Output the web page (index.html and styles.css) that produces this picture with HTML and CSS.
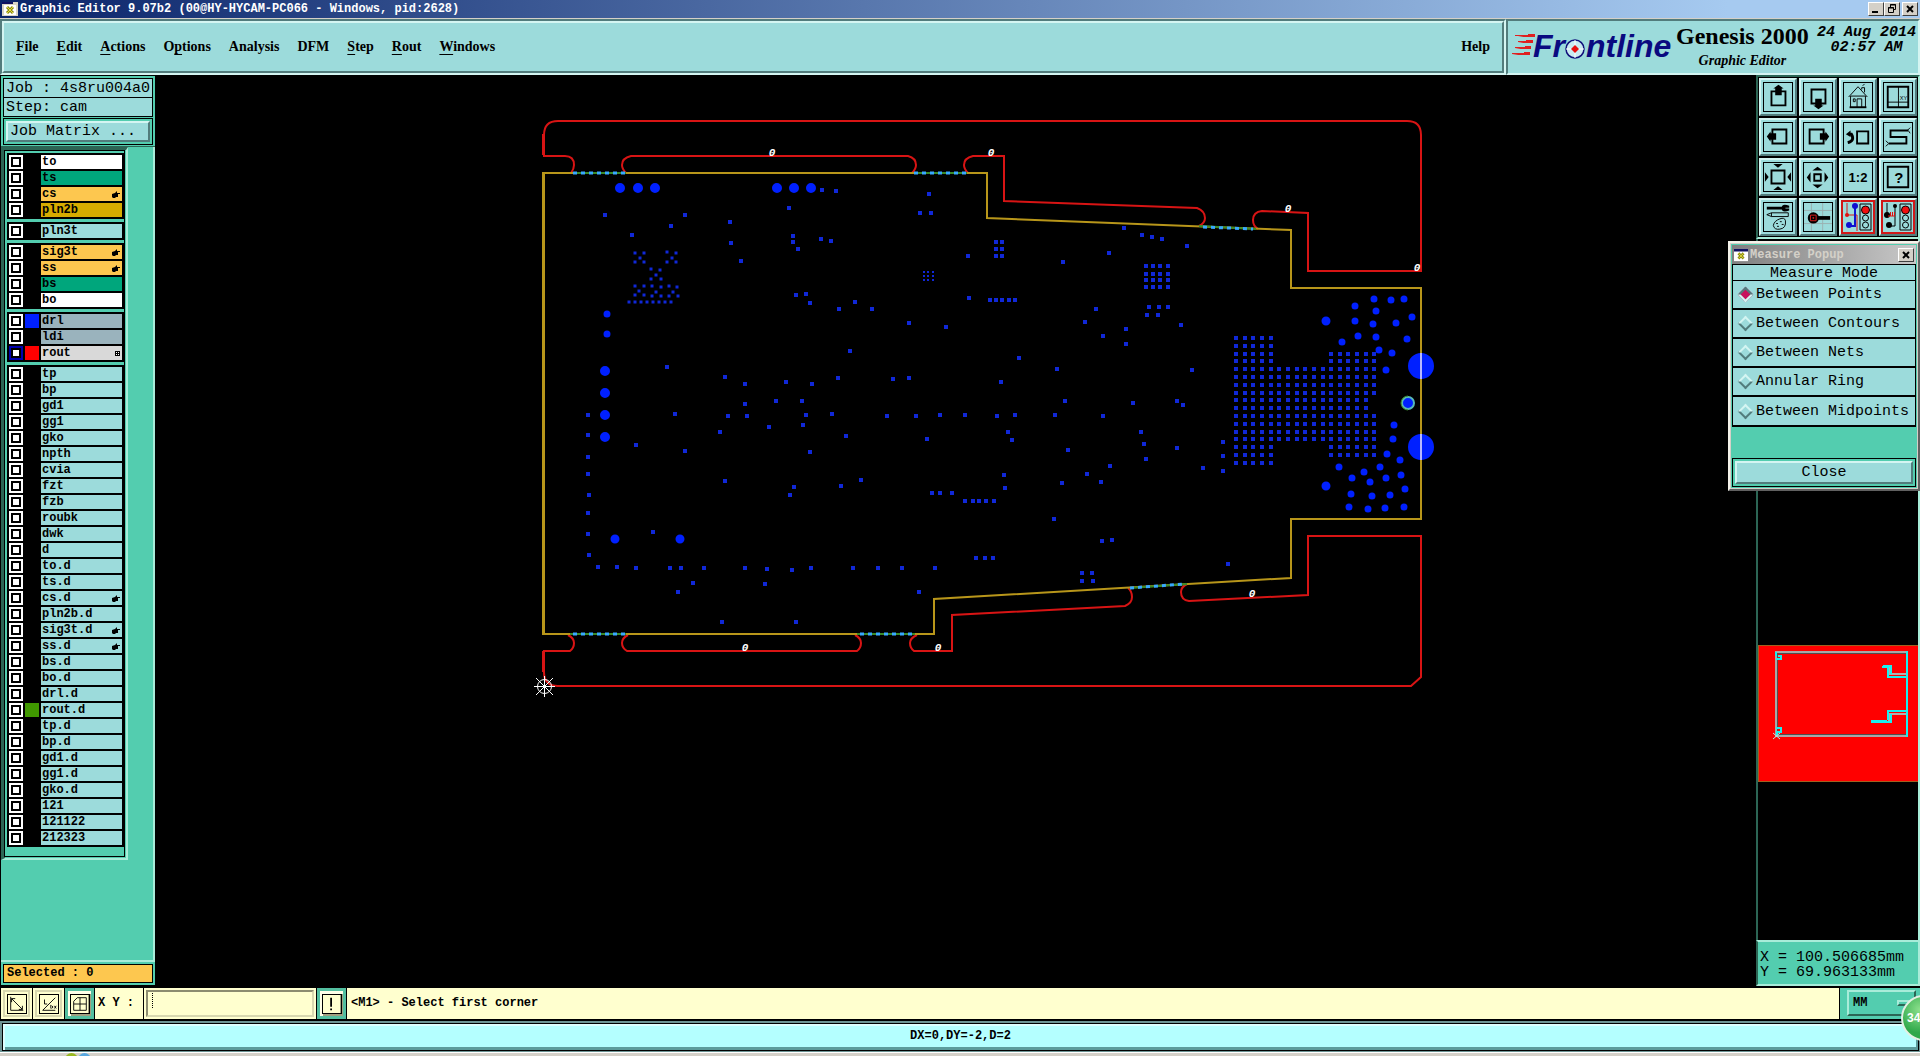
FILE: index.html
```html
<!DOCTYPE html>
<html lang="en">
<head>
  <meta charset="utf-8">
  <title>Graphic Editor 9.07b2</title>
  <link rel="stylesheet" href="styles.css">
</head>
<body>
<div class="app">

  <div class="titlebar">
    <svg class="app-icon" width="16" height="14" viewBox="0 0 16 14">
      <rect width="16" height="14" fill="#d8d4c4"/>
      <rect width="11" height="2" fill="#101060"/>
      <rect x="2" y="3" width="12" height="10" fill="#fff"/>
      <path d="M5 5l6 6M11 5l-6 6" stroke="#8a8a10" stroke-width="3"/>
      <path d="M5 5l6 6M11 5l-6 6" stroke="#e8e040" stroke-width="1"/>
    </svg>
    <span class="titlebar-text">Graphic Editor 9.07b2 (00@HY-HYCAM-PC066 - Windows, pid:2628)</span>
    <div class="window-buttons">
      <button class="win-btn" aria-label="Minimize"><svg width="12" height="10" viewBox="0 0 12 10"><path d="M2 8h6" stroke="#000" stroke-width="2"/></svg></button>
      <button class="win-btn" aria-label="Restore"><svg width="12" height="10" viewBox="0 0 12 10"><path d="M4.500 3.500v-3h5v5h-2M4 1h6M2.500 3.500h5v5h-5zM2 4h6" fill="none" stroke="#000"/></svg></button>
      <button class="win-btn close" aria-label="Close window"><svg width="12" height="10" viewBox="0 0 12 10"><path d="M3 2l6 6M9 2l-6 6" stroke="#000" stroke-width="2"/></svg></button>
    </div>
  </div>

  <header class="header">
    <nav class="menubar">
      <div class="menubar-inner">
        <button class="menu"><u>F</u>ile</button>
        <button class="menu"><u>E</u>dit</button>
        <button class="menu"><u>A</u>ctions</button>
        <button class="menu">O<u>p</u>tions</button>
        <button class="menu">Analysis</button>
        <button class="menu">DFM</button>
        <button class="menu"><u>S</u>tep</button>
        <button class="menu"><u>R</u>out</button>
        <button class="menu"><u>W</u>indows</button>
        <button class="menu help">Help</button>
      </div>
    </nav>
    <div class="brand">
      <svg class="logo" width="162" height="46" viewBox="0 -6 162 46">
        <path d="M6 6l17-3v3zM6 12l15-3v3zM3 18l16-3v3zM0 24l18-3v3z" fill="#e02020"/>
        <path d="M3 4.500h18M6 10.500h14M3 16.500h16M0 22.500h18" stroke="#e02020"/>
        <path d="M16 3h7v3h-7zM14 9h7v3h-7zM13 15h6v3h-6zM12 21h6v3h-6z" fill="#e02020"/>
        <text x="21" y="26" class="logo-text">Fr</text>
        <circle cx="63" cy="18" r="9" fill="#c9eaf0" stroke="#10107a" stroke-width="1.500"/>
        <path d="M63 9v18M54 18h18" stroke="#fff"/>
        <path d="M63 14l4 4-4 4-4-4z" fill="#e80c0c"/>
        <text x="74" y="26" class="logo-text">ntline</text>
      </svg>
      <div class="product">
        <div class="product-name">Genesis 2000</div>
        <div class="product-sub">Graphic Editor</div>
      </div>
      <div class="clock">24 Aug 2014<br>02:57 AM</div>
    </div>
  </header>

  <main class="main">
    <aside class="left">
      <div class="job-box">
        <div class="job-line">Job : 4s8ru004a0</div>
        <div class="job-line">Step: cam</div>
        <div class="matrix-frame"><button class="matrix-btn">Job Matrix ...</button></div>
      </div>
      <div class="layers-area">
        <div class="layers" id="layers"></div>
      </div>
      <div class="selected">Selected : 0</div>
    </aside>

    <div class="canvas">
      <svg class="board" viewBox="155 75 1601 912" preserveAspectRatio="xMinYMin meet">
        <g id="holes"></g>
        <!-- rout path -->
        <g fill="none" stroke="#d81414" stroke-width="2">
          <path d="M571 173q3-4 3-8q0-9-9-9h-21v-21q0-14 14-14h849q14 0 14 14v136h-113v-58l-46-2q-9 1-9 9q0 6 5 9"/>
          <path d="M626 173q-4-4-4-8q0-7 9-9h277q8 2 8 9q0 4-4 8"/>
          <path d="M968 173q-4-4-4-8q0-7 9-9h31v45l193 7q8 3 8 10q0 5-6 8"/>
          <path d="M568 635q6 3 6 8q0 5-4 8h-26v21q0 14 14 14h853l10-9v-141h-113v59l-119 6q-8-1-8-9q0-5 6-8"/>
          <path d="M628 635q-6 3-6 8q0 5 5 8h230q4-3 4-8q0-5-6-8"/>
          <path d="M917 635q-7 3-7 8q0 5 4 8h38v-36l173-9q7-3 7-9q0-6-4-9"/>
          <path d="M543 155v-21M543 651v21" />
        </g>
        <!-- board profile -->
        <g fill="none" stroke="#b8961a" stroke-width="2">
          <path d="M544 173h443v45l304 12v58h130v231h-130v59l-357 21v35h-390z"/>
          <path d="M543 172v463"/>
        </g>
        <!-- break-off tabs -->
        <g fill="none" stroke-width="2">
          <path d="M573 173h53M914 173h53M1199 226l57 3M570 634h56M857 634h58M1130 588l57-4" stroke="#3a8a28"/>
          <path d="M573 173h53M914 173h53M1203 227l50 2M573 634h53M860 634h52M1130 588l54-4" stroke="#38a8ff" stroke-width="3" stroke-dasharray="4 4"/>
        </g>
        <path d="M1421 353v26M1421 434v26" stroke="#b8b8ff" stroke-width="2"/>
        <circle cx="1408" cy="403" r="6" fill="#0020ff" stroke="#58b8b8" stroke-width="2"/>
        <path d="M1408 396a7 7 0 0 0 0 14" fill="none" stroke="#3a8a28" stroke-width="1"/>
        <g class="marks">
          <text x="772" y="156">0</text>
          <text x="991" y="156">0</text>
          <text x="1288" y="212">0</text>
          <text x="1417" y="271">0</text>
          <text x="745" y="651">0</text>
          <text x="938" y="651">0</text>
          <text x="1252" y="597">0</text>
        </g>
        <!-- origin -->
        <g fill="none" stroke="#fff">
          <circle cx="544.500" cy="686.500" r="7"/>
          <path d="M534 686.500h21M544.500 676v21M536 678l17 17M553 678l-17 17"/>
        </g>
      </svg>
    </div>

    <aside class="right">
      <div class="tools">
        <button class="tool" aria-label="Pan up"><svg viewBox="0 0 30 30"><path d="M8 9h15v15h-15z" class="s2"/><path d="M12 13v-7h-2l5.500-4 5.500 4h-2v7z"/></svg></button>
        <button class="tool" aria-label="Pan down"><svg viewBox="0 0 30 30"><path d="M8 7h15v15h-15z" class="s2"/><path d="M12 17v7h-2l5.500 4 5.500-4h-2v-7z"/></svg></button>
        <button class="tool" aria-label="Home"><svg viewBox="0 0 30 30"><path d="M5 15L15 4l10 11M7 14v12h16v-12M7 14h16" class="s1"/><path d="M6 26h18" class="s2"/><path d="M19 7v-2h3v5M14 26v-9h5v9M10 17h2v3h-2zM20 3l2-2" class="s1"/></svg></button>
        <button class="tool" aria-label="Zoom area"><svg viewBox="0 0 30 30"><path d="M4 4h22v22h-22z" class="s2"/><path d="M15.500 4v22M4 20.500h22" class="s1"/><text x="21" y="18" class="tiny">XY</text></svg></button>
        <button class="tool" aria-label="Pan left"><svg viewBox="0 0 30 30"><path d="M9 7h15v15h-15z" class="s2"/><path d="M13 11h-6v-2l-4 5.500 4 5.500v-2h6z"/></svg></button>
        <button class="tool" aria-label="Pan right"><svg viewBox="0 0 30 30"><path d="M6 7h15v15h-15z" class="s2"/><path d="M17 11h6v-2l4 5.500-4 5.500v-2h-6z"/></svg></button>
        <button class="tool" aria-label="Previous view"><svg viewBox="0 0 30 30"><path d="M14 9h12v13h-12z" class="s2"/><path d="M4 21q8-2 4-9h-2" fill="none" stroke="#000" stroke-width="3"/><path d="M2 12l5-4v7z"/></svg></button>
        <button class="tool" aria-label="Net trace"><svg viewBox="0 0 30 30"><path d="M26 8h-19v7h17v7h-19" class="s2"/><path d="M25 8l3-3M26 8l2 3M5 22l-3-3M5 22l-3 3" class="s1"/></svg></button>
        <button class="tool" aria-label="Zoom in"><svg viewBox="0 0 30 30"><path d="M8 8h14v14h-14z" class="s2"/><path d="M10 1h10l-5 4zM10 29h10l-5-4zM1 10v10l4-5zM29 10v10l-4-5z"/></svg></button>
        <button class="tool" aria-label="Zoom out"><svg viewBox="0 0 30 30"><path d="M11 12h7v7h-7z" class="s2"/><path d="M9 8h11l-5.500-4zM9 23h11l-5.500 4zM7 10v11l-4-5.500zM22 10v11l4-5.500z"/></svg></button>
        <button class="tool" aria-label="Scale one to two"><svg viewBox="0 0 30 30"><text x="15" y="20" class="ratio">1:2</text></svg></button>
        <button class="tool" aria-label="Query"><svg viewBox="0 0 30 30"><path d="M4 4h22v22h-22z" class="s2"/><text x="16" y="21" class="query">?</text></svg></button>
        <button class="tool" aria-label="Setup"><svg viewBox="0 0 30 30"><path d="M3 4h17v3h-17z"/><path d="M27 3q-8-3-8 2.500q0 5.500 8 2.500v-2h-4v-1h4z"/><path d="M3 12.500l5-2h18v4h-18zM8 10.500v4" class="s1"/><path d="M17 17q5-2 6 2q1 8-6 9q-6 1-7-4q1-5 7-7z" class="s1"/><path d="M13 22h2M17 20h2M14 25h2M19 23h2" class="s1"/></svg></button>
        <button class="tool" aria-label="Snap"><svg viewBox="0 0 30 30"><path d="M8 0v30M20 0v30M0 8h30M0 22h30" stroke="#9ab0b0"/><circle cx="10" cy="16" r="6"/><path d="M14 14h14v4h-14z"/><path d="M7 13h6v6h-6zM9.500 15.500h1v1h-1z" fill="none" stroke="#e02020"/></svg></button>
        <button class="tool alert" aria-label="Net analyzer"><svg viewBox="0 0 30 30"><path d="M4 1v12h10v16" fill="none" stroke="#d81818"/><circle cx="4" cy="13" r="2" fill="#e01010"/><path d="M12 5v19h-7" fill="none" stroke="#1010d0" stroke-width="2"/><circle cx="12" cy="4" r="3" fill="#1010d0"/><circle cx="6" cy="23" r="3" fill="#1010d0"/><path d="M17 2h11v26h-11z" class="s1"/><circle cx="22.500" cy="8" r="4" fill="#f01010" stroke="#000"/><circle cx="22.500" cy="16" r="3" class="s1"/><circle cx="22.500" cy="23" r="3" class="s1"/></svg></button>
        <button class="tool alert" aria-label="DRC check"><svg viewBox="0 0 30 30"><path d="M4 1v13M12 5v19h-7" class="s1"/><circle cx="12" cy="4" r="2"/><circle cx="4" cy="13" r="3"/><circle cx="6" cy="23" r="3"/><path d="M5 14h7M7.500 14v-4M9.500 14v-4M11.500 14v-4" fill="none" stroke="#e01010"/><path d="M17 2h11v26h-11z" class="s1"/><circle cx="22.500" cy="8" r="4" fill="#f01010" stroke="#000"/><circle cx="22.500" cy="16" r="3" class="s1"/><circle cx="22.500" cy="23" r="3" class="s1"/></svg></button>
      </div>

      <div class="overview">
        <svg viewBox="1758 239 160 700" preserveAspectRatio="xMinYMin meet">
          <rect x="1758.500" y="645.500" width="162" height="136" fill="#f00" stroke="#a06020"/>
          <g fill="none" stroke-width="2">
            <path d="M1907 652h-131v84h131" stroke="#a8a8a8"/>
            <path d="M1907 653.500h-129.500v81h129.500" stroke="#505050" stroke-width="1"/>
            <path d="M1890 665v9h17M1907 714h-18v9" stroke="#b0b0b0"/>
            <path d="M1907 651v86M1907 677h-19v-10h-6M1907 711h-19v9M1891 714v8h-20" stroke="#18f0f0"/>
            <path d="M1883 666h8v8M1871 721h16" stroke="#18f0f0"/>
            <path d="M1776 652v4M1776 659h5v-3h-3M1777 735v-3h4v-4h-5" stroke="#18f0f0"/>
          </g>
          <path d="M1773 733l7 6M1780 733l-7 6" stroke="#b0e8e8"/>
        </svg>
      </div>
      <div class="coords">X = 100.506685mm<br>Y = 69.963133mm</div>
    </aside>
  </main>

  <div class="command">
    <button class="cmd-btn" aria-label="Select by diagonal"><svg viewBox="0 0 20 20"><path d="M3 2v15h14M4 4l12 12M4 8v-4h4M16 12v4h-4" class="s1"/></svg></button>
    <button class="cmd-btn" aria-label="Angle"><svg viewBox="0 0 20 20"><path d="M3 17L17 3M3 17h14M5 5v5h3M12 11v4M13 12q3 1 0 3M16 12l2 3M18 12l-2 3" class="s1"/></svg></button>
    <button class="cmd-btn framed" aria-label="Grid snap"><svg viewBox="0 0 20 20"><path d="M3 7l4-4h10v14h-14zM10 3v14M3 10h14" class="s1"/></svg></button>
    <label class="xy-label" for="xy">X Y :</label>
    <div class="xy-box">
      <input type="text" id="xy" class="xy-input">
      <span class="ibeam"></span>
    </div>
    <button class="cmd-btn framed" aria-label="Alert"><svg viewBox="0 0 20 20"><path d="M9 3v10M9 15v2" class="s2"/></svg></button>
    <div class="prompt">&lt;M1&gt; - Select first corner</div>
    <div class="units">
      <select class="units-select" aria-label="Units">
        <option>MM</option>
        <option>Inch</option>
      </select>
      <span class="units-bar"></span>
    </div>
  </div>

  <div class="status"><div class="status-inner">DX=0,DY=-2,D=2</div></div>

  <div class="taskbar">
    <span class="task-dot green"></span><span class="task-dot blue"></span>
  </div>

  <form class="popup">
    <div class="popup-title">
      <svg class="app-icon" width="14" height="14" viewBox="0 0 16 14">
        <rect width="16" height="14" fill="#fff"/>
        <rect width="16" height="3" fill="#101060"/>
        <path d="M5 5l6 6M11 5l-6 6" stroke="#8a8a10" stroke-width="3"/>
        <path d="M5 5l6 6M11 5l-6 6" stroke="#e8e040" stroke-width="1"/>
      </svg>
      <span>Measure Popup</span>
      <button type="button" class="win-btn popup-x" aria-label="Close popup"><svg width="12" height="10" viewBox="0 0 12 10"><path d="M3 2l6 6M9 2l-6 6" stroke="#000" stroke-width="2"/></svg></button>
    </div>
    <div class="popup-head">Measure Mode</div>
    <div class="modes">
      <label class="mode"><input type="radio" name="mode" checked><span>Between Points</span></label>
      <label class="mode"><input type="radio" name="mode"><span>Between Contours</span></label>
      <label class="mode"><input type="radio" name="mode"><span>Between Nets</span></label>
      <label class="mode"><input type="radio" name="mode"><span>Annular Ring</span></label>
      <label class="mode"><input type="radio" name="mode"><span>Between Midpoints</span></label>
    </div>
    <div class="popup-foot"><button type="button" class="popup-close">Close</button></div>
  </form>

  <div class="badge">34</div>
</div>
<script src="script.js"></script>
</body>
</html>
```
FILE: styles.css
```css
* {
  box-sizing: border-box;
}
body {
  margin: 0;
  background: #000;
  color: #000;
  font-family: "Liberation Mono", monospace;
  font-size: 12px;
}
button,
input,
select {
  font: inherit;
  color: inherit;
  margin: 0;
  padding: 0;
  border: 0;
  border-radius: 0;
  background: none;
}
.app {
  position: relative;
  display: flex;
  flex-direction: column;
  min-height: 100vh;
  overflow: hidden;
}

/* title bar */
.titlebar {
  display: flex;
  align-items: center;
  height: 19px;
  padding: 0 2px;
  border-bottom: 1px solid #d4d0c8;
  background: linear-gradient(to right, #0a246a, #a6caf0 90%);
  color: #fff;
  font-weight: bold;
}
.app-icon {
  margin-right: 2px;
}
.window-buttons {
  display: flex;
  margin-left: auto;
}
.win-btn {
  display: flex;
  align-items: center;
  justify-content: center;
  width: 16px;
  height: 14px;
  background: #d4d0c8;
  border: 1px solid;
  border-color: #fff #404040 #404040 #fff;
}
.win-btn.close {
  margin-left: 2px;
}

/* header */
.header {
  display: flex;
  height: 56px;
  background: #9cdbdb;
}
.menubar {
  flex: 1;
  border: 2px solid;
  border-color: #527c7c #d4f5f2 #d4f5f2 #527c7c;
}
.menubar-inner {
  display: flex;
  align-items: center;
  gap: 18px;
  height: 100%;
  padding: 0 12px;
  border: 2px solid;
  border-color: #d4f5f2 #527c7c #527c7c #d4f5f2;
}
.menu {
  font-family: "Liberation Serif", serif;
  font-size: 14px;
  font-weight: bold;
}
.menu u {
  text-underline-offset: 3px;
}
.menu.help {
  margin-left: auto;
}
.brand {
  display: flex;
  width: 414px;
  padding-left: 4px;
  border: 2px solid;
  border-color: #527c7c #d4f5f2 #d4f5f2 #527c7c;
}
.logo {
  flex: none;
  margin-top: 4px;
}
.logo-text {
  font-family: "Liberation Sans", sans-serif;
  font-size: 32px;
  font-weight: bold;
  font-style: italic;
  fill: #0a0a80;
}
.product {
  padding-left: 2px;
  font-family: "Liberation Serif", serif;
  font-weight: bold;
  text-align: center;
}
.product-name {
  font-size: 24px;
  line-height: 30px;
  white-space: nowrap;
}
.product-sub {
  font-size: 14px;
  font-style: italic;
  line-height: 20px;
}
.clock {
  margin-left: auto;
  padding: 4px 2px 0 0;
  font-size: 15px;
  font-weight: bold;
  font-style: italic;
  line-height: 15px;
  text-align: center;
  white-space: nowrap;
}

/* main */
.main {
  flex: 1;
  display: grid;
  grid-template-columns: 155px 1fr 164px;
  background: #000;
}
.left {
  display: flex;
  flex-direction: column;
  margin: 1px 0 2px 1px;
  background: #53cdaf;
}
.job-box {
  padding: 2px 2px 1px;
  border-bottom: 1px solid #2c6655;
}
.job-line {
  height: 20px;
  margin-bottom: -1px;
  padding-left: 2px;
  border: 1px solid #000;
  background: #9cdbdb;
  font-size: 15px;
  line-height: 19px;
}
.matrix-frame {
  margin-top: 2px;
  padding: 2px;
  border: 1px solid #000;
}
.matrix-btn {
  display: block;
  width: 100%;
  height: 21px;
  padding-left: 2px;
  border: 2px solid;
  border-color: #d4f5f2 #527c7c #527c7c #d4f5f2;
  background: #9cdbdb;
  font-size: 15px;
  line-height: 17px;
  text-align: left;
}
.layers-area {
  flex: 1;
  border-right: 2px solid #a8ecd9;
  border-bottom: 2px solid #a8ecd9;
}
.layers {
  display: flex;
  flex-direction: column;
  gap: 3px;
  width: 127px;
  padding: 3px 2px 11px 2px;
  background: #53cdaf;
  border: 4px solid;
  border-width: 3px 2px 2px 4px;
  border-color: #2c6655 #a8ecd9 #a8ecd9 #2c6655;
  outline: 1px solid #000;
  outline-offset: -4px;
}
.group {
  display: flex;
  flex-direction: column;
  gap: 2px;
  padding: 2px;
  background: #000;
}
.layer {
  display: grid;
  grid-template-columns: 14px 14px 1fr;
  gap: 2px;
  height: 14px;
}
.layer input {
  appearance: none;
  width: 14px;
  height: 14px;
  border: 2px solid #fff;
  background: #fff;
  box-shadow: inset 0 0 0 2px #000;
}
.layer input:checked {
  border-color: #0000b0;
}
.layer-name {
  display: flex;
  align-items: center;
  padding: 0 2px 0 1px;
  background: #9cdbdb;
  font-weight: bold;
  line-height: 14px;
}
.layer-name svg {
  margin-left: auto;
}
.mask .layer-name { background: #00a67c; }
.silk .layer-name { background: #fff; }
.signal .layer-name { background: #fdc74f; }
.plane .layer-name { background: #d6ab00; }
.drill .layer-name { background: #9ab3bd; }
.rout .layer-name { background: #d9d9d9; }
.swatch-blue { background: #0020ff; }
.swatch-red { background: #f00; }
.swatch-green { background: #409800; }
.selected {
  height: 19px;
  margin: 2px;
  padding-left: 3px;
  border: 1px solid #000;
  background: #fdc74f;
  font-weight: bold;
  line-height: 17px;
}

.canvas {
  min-width: 0;
}
.board {
  display: block;
  width: 100%;
}
.marks text {
  fill: #fff;
  font-size: 11px;
  font-weight: bold;
  font-style: italic;
  text-anchor: middle;
}

/* right side */
.right {
  display: flex;
  flex-direction: column;
}
.tools {
  display: grid;
  grid-template-columns: repeat(4, 38px);
  gap: 2px;
  padding: 1px;
  border: 2px solid;
  border-color: #2c6655 #a8ecd9 #a8ecd9 #2c6655;
}
.tool {
  width: 38px;
  height: 38px;
  padding: 2px;
  border: 2px solid;
  border-color: #d4f5f2 #527c7c #527c7c #d4f5f2;
  background: #9cdbdb;
}
.tool svg {
  display: block;
  width: 30px;
  height: 30px;
  border: 1px solid #000;
}
.tool.alert {
  padding: 0;
}
.tool.alert svg {
  width: 34px;
  height: 34px;
  border: 2px solid #d01818;
}
.s1 {
  fill: none;
  stroke: #000;
  stroke-width: 1;
}
.s2 {
  fill: none;
  stroke: #000;
  stroke-width: 2;
}
.tiny,
.ratio,
.query {
  text-anchor: middle;
  font-family: "Liberation Sans", sans-serif;
}
.tiny {
  font-size: 6px;
}
.ratio {
  font-size: 14px;
  font-weight: bold;
}
.query {
  font-size: 16px;
  font-weight: bold;
}
.overview {
  flex: 1;
  border-left: 2px solid #2c6655;
  border-right: 2px solid #a8ecd9;
}
.overview svg {
  display: block;
  width: 100%;
}
.coords {
  height: 46px;
  margin-bottom: 1px;
  padding: 8px 0 0 2px;
  border: 2px solid;
  border-color: #a8ecd9 #a8ecd9 #a8ecd9 #2c6655;
  background: #53cdaf;
  font-size: 15px;
  line-height: 15px;
}

/* command line */
.command {
  display: flex;
  height: 34px;
  padding: 1px 0 2px 1px;
  gap: 1px;
  background: #000;
}
.cmd-btn {
  display: flex;
  align-items: center;
  justify-content: center;
  width: 31px;
  background: #ffffcf;
  box-shadow: inset 0 0 0 2px #ffffcf, inset 0 0 0 4px #d8d8b0;
}
.cmd-btn.framed {
  width: 29px;
  box-shadow: inset 0 0 0 3px #53bfa0, inset 3px 3px 0 3px #ffffe8, inset -3px -3px 0 3px #a0a080;
}
.cmd-btn svg {
  width: 20px;
  height: 20px;
  border: 1px solid #000;
}
.xy-label {
  width: 48px;
  padding-left: 3px;
  background: #ffffcf;
  font-weight: bold;
  line-height: 31px;
}
.xy-box {
  position: relative;
  width: 172px;
  padding: 2px;
  background: #ffffcf;
}
.xy-input {
  width: 100%;
  height: 27px;
  padding: 0 8px;
  border: 2px solid;
  border-color: #8c8c70 #d8d8b0 #d8d8b0 #8c8c70;
}
.ibeam {
  position: absolute;
  left: 8px;
  top: 5px;
  height: 15px;
  border-left: 1px dotted #000;
}
.prompt {
  flex: 1;
  padding-left: 4px;
  background: #ffffcf;
  font-weight: bold;
  line-height: 31px;
}
.units {
  position: relative;
  width: 80px;
  padding: 2px 4px 3px 7px;
  background: #53cdaf;
}
.units-select {
  appearance: none;
  width: 100%;
  height: 26px;
  padding-left: 4px;
  border: 2px solid;
  border-color: #a8ecd9 #2c6655 #2c6655 #a8ecd9;
  font-weight: bold;
}
.units-bar {
  position: absolute;
  right: 5px;
  top: 12px;
  width: 18px;
  height: 6px;
  border: 2px solid;
  border-color: #a8ecd9 #2c6655 #2c6655 #a8ecd9;
}
.status {
  height: 31px;
  padding: 2px 1px 1px 2px;
  background: #6c9494;
}
.status-inner {
  height: 100%;
  border: 1px solid #000;
  background: #b4ffff;
  box-shadow: inset 2px 2px 0 #dcffff, inset -2px -3px 0 #5c9c9c;
  font-weight: bold;
  line-height: 25px;
  text-align: center;
}
.taskbar {
  display: flex;
  height: 4px;
  padding-left: 65px;
  border-top: 1px solid #fff;
  background: #d4d0c8;
  overflow: hidden;
}
.task-dot {
  flex: none;
  width: 13px;
  height: 13px;
  border-radius: 50%;
}
.task-dot.green { background: #98b820; }
.task-dot.blue { background: #58a8e0; }

/* measure popup */
.popup {
  position: absolute;
  top: 241px;
  right: 0;
  width: 192px;
  padding: 2px;
  border: 2px solid;
  border-color: #f4f2ea #606060 #606060 #f4f2ea;
  background: #53cdaf;
  outline: 1px solid #d4d0c8;
  outline-offset: -3px;
  font-size: 15px;
}
.popup-title {
  display: flex;
  align-items: center;
  height: 19px;
  padding: 0 2px;
  background: linear-gradient(to right, #808080, #c8c8c8);
  color: #d4d0c8;
  font-size: 12px;
  font-weight: bold;
}
.popup-x {
  margin-left: auto;
}
.popup-head {
  height: 17px;
  border: 1px solid #000;
  background: #9cdbdb;
  line-height: 17px;
  text-align: center;
}
.modes {
  margin-bottom: 31px;
  border: 1px solid #000;
  border-top: 0;
}
.mode {
  display: flex;
  align-items: center;
  gap: 3px;
  height: 29px;
  padding-left: 5px;
  border-bottom: 2px solid #000;
  background: #9cdbdb;
  white-space: nowrap;
}
.mode:last-child {
  border-bottom: 1px solid #000;
}
.mode input {
  appearance: none;
  flex: none;
  width: 11px;
  height: 11px;
  margin: 0 2px;
  border: 2px solid;
  border-color: #d4f5f2 #527c7c #527c7c #d4f5f2;
  transform: rotate(45deg);
}
.mode input:checked {
  border-color: #527c7c #d4f5f2 #d4f5f2 #527c7c;
  background: #c8105c;
}
.mode span {
  line-height: 27px;
}
.popup-foot {
  padding: 2px;
  border: 1px solid #000;
}
.popup-close {
  display: block;
  width: 100%;
  height: 23px;
  border: 2px solid;
  border-color: #d4f5f2 #527c7c #527c7c #d4f5f2;
  background: #9cdbdb;
}

.badge {
  position: absolute;
  right: -27px;
  bottom: 15px;
  width: 46px;
  height: 46px;
  padding-left: 4px;
  border: 2px solid #e4f0e4;
  border-radius: 50%;
  background: radial-gradient(circle at 40% 30%, #8ce08c, #2fa84a 60%);
  color: #fff;
  font-family: "Liberation Sans", sans-serif;
  font-weight: bold;
  line-height: 42px;
}
```
FILE: script.js
```js
const SVG_NS = "http://www.w3.org/2000/svg";

const HAND = '<svg width="8" height="7" viewBox="0 0 8 7"><path d="M0 3l3-1 2-2v2h3v1h-2v3h-2l-1 1h-2l-1-1z"/></svg>';
const CROSS = '<svg width="5" height="5" viewBox="0 0 5 5"><path d="M0 0h5v5h-5z"/><path d="M1 1h1v1h-1zM3 1h1v1h-1zM1 3h1v1h-1zM3 3h1v1h-1z" fill="#fff"/></svg>';

// name, kind, options
const groups = [
  [["to", "silk"], ["ts", "mask"], ["cs", "signal", { icon: HAND }], ["pln2b", "plane"]],
  [["pln3t", ""]],
  [["sig3t", "signal", { icon: HAND }], ["ss", "signal", { icon: HAND }], ["bs", "mask"], ["bo", "silk"]],
  [["drl", "drill", { swatch: "blue" }], ["ldi", "drill"], ["rout", "rout", { swatch: "red", icon: CROSS, checked: true }]],
  [
    ["tp"], ["bp"], ["gd1"], ["gg1"], ["gko"], ["npth"], ["cvia"], ["fzt"], ["fzb"], ["roubk"],
    ["dwk"], ["d"], ["to.d"], ["ts.d"], ["cs.d", "", { icon: HAND }], ["pln2b.d"],
    ["sig3t.d", "", { icon: HAND }], ["ss.d", "", { icon: HAND }], ["bs.d"], ["bo.d"], ["drl.d"],
    ["rout.d", "", { swatch: "green" }], ["tp.d"], ["bp.d"], ["gd1.d"], ["gg1.d"], ["gko.d"],
    ["121"], ["121122"], ["212323"]
  ]
];

function buildLayers() {
  const list = document.getElementById("layers");
  groups.forEach(rows => {
    const group = document.createElement("div");
    group.className = "group";
    rows.forEach(([name, kind = "", opt = {}]) => {
      const row = document.createElement("label");
      row.className = "layer " + kind;
      row.innerHTML =
        `<input type="checkbox"${opt.checked ? " checked" : ""}>` +
        `<span class="${opt.swatch ? "swatch-" + opt.swatch : ""}"></span>` +
        `<span class="layer-name">${name}${opt.icon || ""}</span>`;
      group.appendChild(row);
    });
    list.appendChild(group);
  });
}

// drill holes by diameter, x y pairs
const holes = {
  26: [1421,366, 1421,447],
  10: [620,188, 638,188, 655,188, 777,188, 794,188, 811,188, 605,371, 605,393, 605,415, 605,437],
  9: [615,539, 680,539, 1326,321, 1326,486],
  7: [
    607,314, 607,334, 1355,306, 1374,299, 1391,300, 1404,299, 1376,311, 1355,321, 1373,324, 1396,323,
    1412,317, 1358,336, 1376,337, 1407,339, 1342,342, 1379,350, 1392,353, 1386,370, 1394,425, 1393,439,
    1387,454, 1400,460, 1339,467, 1352,478, 1364,472, 1380,467, 1370,482, 1386,478, 1401,475, 1405,489,
    1351,494, 1372,496, 1390,495, 1349,507, 1368,509, 1385,508, 1404,507
  ],
  4: [
    822,190, 836,191, 789,208, 929,194, 920,213, 931,213, 605,215, 685,215, 671,226, 632,235, 730,222,
    731,243, 741,261, 793,236, 793,242, 798,249, 821,239, 831,241, 667,367, 725,377, 745,384, 745,404,
    776,401, 802,401, 786,382, 812,384, 838,378, 850,351, 893,379, 909,378, 796,295, 806,294, 810,303,
    839,309, 855,302, 872,309, 909,323, 946,327, 968,256, 969,298,
    588,415, 588,435, 588,457, 588,474, 589,495, 588,513, 588,534, 589,555, 598,567, 617,567, 636,568,
    670,568, 681,568, 704,568, 745,568, 767,569, 792,570, 811,568, 853,568, 878,568, 902,568, 935,568,
    693,583, 678,592, 765,584, 919,592, 722,622, 796,622, 636,445, 675,414, 685,451, 720,432, 728,416,
    747,416, 769,427, 806,415, 803,425, 832,414, 846,436, 810,452, 725,481, 794,487, 790,495, 841,486,
    861,480, 887,416, 916,416, 940,415, 965,415, 927,439, 932,493, 940,493, 952,493, 965,501, 973,501,
    979,501, 986,501, 994,501, 653,532, 976,558, 985,558, 993,558,
    996,242, 1002,242, 996,249, 1002,249, 996,256, 1002,256, 1063,262, 1109,253, 1124,228, 1142,235,
    1152,237, 1162,239, 1187,246, 1149,307, 1159,307, 1168,307, 1147,315, 1158,315, 990,300, 996,300,
    1002,300, 1009,300, 1015,300, 1096,309, 1085,322, 1103,336, 1126,329, 1126,344, 1181,325, 1019,358,
    1001,382, 1057,369, 1192,370, 1065,401, 1133,403, 1177,401, 1183,405, 997,416, 1015,415, 1055,415,
    1103,416, 1008,432, 1012,440, 1068,450, 1141,432, 1144,444, 1146,459, 1177,448, 1223,442, 1223,456,
    1223,471, 1203,468, 1110,466, 1087,474, 1101,482, 1062,483, 1004,475, 1005,488, 1054,519, 1102,541,
    1112,540, 1228,564, 1082,573, 1092,573, 1082,581, 1093,581
  ],
  3: [
    635,253, 644,253, 640,258, 635,262, 644,262, 667,252, 676,253, 672,258, 667,262, 676,262, 651,269,
    660,270, 656,275, 651,279, 661,279, 635,286, 644,286, 652,286, 661,287, 669,286, 677,287, 639,291,
    656,292, 673,292, 635,295, 644,295, 652,296, 661,296, 669,296, 678,296, 629,302, 635,302, 641,302,
    647,302, 653,302, 659,302, 665,302, 671,302
  ],
  2: []
};

function addGrid(size, xs, ys) {
  xs.forEach(x => ys.forEach(y => holes[size].push(x, y)));
}

// BGA field, 17 x 17 with the corners left out
function addBga() {
  for (let c = 0; c < 17; c++) {
    for (let r = 0; r < 17; r++) {
      if (c > 4 && c < 11 && (r < 4 || r > 13)) continue;
      if (c > 10 && (r < 2 || r > 15)) continue;
      if (c === 16 && (r === 8 || r === 9)) continue;
      holes[4].push(Math.round(1236 + c * 8.65), Math.round(338 + r * 7.8));
    }
  }
}

function drawHoles() {
  const layer = document.getElementById("holes");
  Object.entries(holes).forEach(([size, pts]) => {
    let d = "";
    for (let i = 0; i < pts.length; i += 2) {
      d += `M${pts[i]} ${pts[i + 1]}h0`;
    }
    const path = document.createElementNS(SVG_NS, "path");
    path.setAttribute("d", d);
    path.setAttribute("stroke", size > 4 ? "#0020ff" : "#1028d8");
    path.setAttribute("stroke-width", size);
    path.setAttribute("stroke-linecap", size > 4 ? "round" : "square");
    layer.appendChild(path);
  });
}

addGrid(2, [924, 928, 933], [272, 276, 280]);
addGrid(4, [1146, 1153, 1160, 1168], [266, 274, 280, 287]);
addBga();
buildLayers();
drawHoles();
```
